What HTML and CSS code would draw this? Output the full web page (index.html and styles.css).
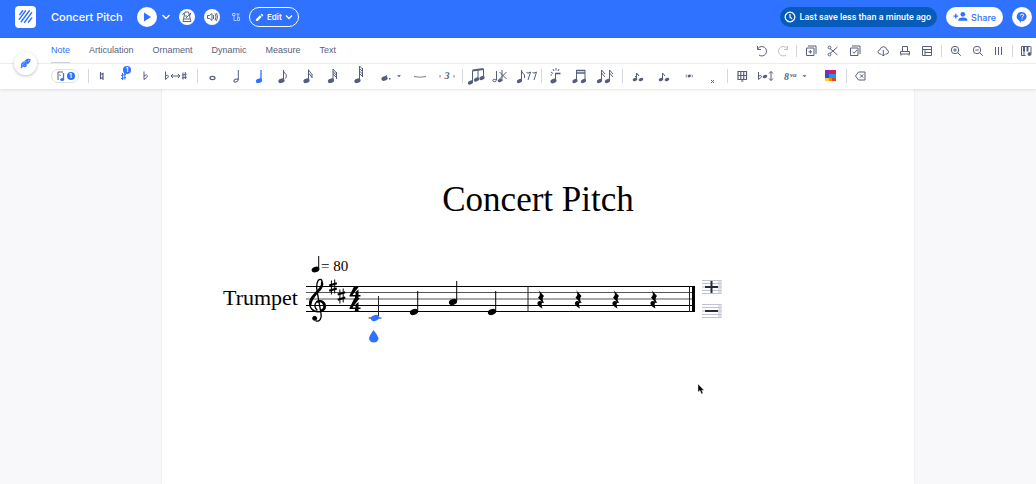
FILE: index.html
```html
<!DOCTYPE html>
<html lang="en">
<head>
<meta charset="utf-8">
<title>Concert Pitch</title>
<link rel="stylesheet" href="styles.css">
</head>
<body>
<svg class="defs" aria-hidden="true">
  <defs>
    <symbol id="head" viewBox="0 0 8 6"><ellipse cx="4" cy="3" rx="3.2" ry="2.2" transform="rotate(-20 4 3)" fill="currentColor"/></symbol>
    <g id="rest"><path d="M-2.500 -10 L3 -4 Q0 -1 3.200 3 Q-1 1.500 1.500 8.500 Q-4.500 5.500 -3.500 2.500 Q-1.500 0 1 2 L-3 -2.500 Q.5 -5.500 -2.500 -10Z"/></g>
    <g id="note"><ellipse cx="0" cy="0" rx="4.200" ry="2.900" transform="rotate(-20)"/><path d="M3.200 -1h1v-20h-1z"/></g>
    <g id="sharp"><path d="M-1.600 -6.500V7.500M1.700 -7.500V6.500" fill="none" stroke="#000" stroke-width="1"/><path d="M-3.800 -1.500L3.800 -3.800M-3.800 3.800L3.800 1.500" fill="none" stroke="#000" stroke-width="2.200"/></g>
  </defs>
</svg>

<header class="topbar">
  <a class="logo" href="#" aria-label="Home"><svg viewBox="0 0 22 22"><g stroke="#2f72ff" stroke-width="1.500" stroke-linecap="round"><path d="M5 9l3-4M4.500 14l6.500-9M6.500 16.500L15 5M10 17l7.500-10M14 17l3.500-4.500"/></g></svg></a>
  <h1 class="doc-title">Concert Pitch</h1>
  <button class="round play" aria-label="Play"><svg viewBox="0 0 20 20"><path d="M7 5.500v9l7-4.500z" fill="#2f72ff"/></svg></button>
  <button class="plain chevron" aria-label="Playback options"><svg viewBox="0 0 10 10"><path d="M1.500 3l3.500 3.500L8.500 3" stroke="#fff" stroke-width="1.400"/></svg></button>
  <button class="round small metronome" aria-label="Metronome"><svg viewBox="0 0 16 16"><path d="M6 3h3.500l2.500 9.500H4zM5 10h6M7 9l5-5M5 4l-1.500 2M10 5l2 1M7 6v2" stroke="#4d5878" stroke-width=".9"/></svg></button>
  <button class="round small sound" aria-label="Sound"><svg viewBox="0 0 16 16"><path d="M3.500 6.500h2l2.500-2v7l-2.500-2h-2zM9.500 6v4M11 4.500q2 3.500 0 7M12.500 4q2 4 0 8" stroke="#4d5878" stroke-width=".9"/></svg></button>
  <button class="plain tuner" aria-label="Count in"><svg viewBox="0 0 12 12"><path d="M2.500 2.500h2.500v2h-2.500zM4 4.500v5h2.500M6.500 3h3M8 3v3.500M7.500 6.500h2v3h-2z" stroke="#c3d5ff" stroke-width=".9"/></svg></button>
  <button class="edit"><svg viewBox="0 0 10 10"><path d="M1 9V7l4.500-4.500 2 2L3 9zM6.200 1.800L7.500.7l1.800 1.800-1.100 1.300z" fill="#fff"/></svg>Edit<svg class="tiny" viewBox="0 0 8 8"><path d="M1 2.500l3 3 3-3" stroke="#fff" stroke-width="1.300"/></svg></button>
  <div class="account">
    <p class="saved"><svg viewBox="0 0 12 12"><path d="M6 1.200a4.800 4.800 0 1 0 .01 0M6 3v3.200l2 1.600" stroke="#fff" stroke-width="1.200"/></svg>Last save less than a minute ago</p>
    <button class="share"><svg viewBox="0 0 16 12"><path d="M3 3v5M.5 5.500h5" stroke="#2f72ff" stroke-width="1.400"/><circle cx="10.500" cy="3.500" r="2.500" fill="#2f72ff"/><path d="M5.500 10.500q0-3.500 5-3.500t5 3.500z" fill="#2f72ff"/></svg>Share</button>
    <button class="round help" aria-label="Help"><svg viewBox="0 0 20 20"><path d="M10 5a4.600 4.600 0 1 1-1 9.100L9 16l-2-2.500A4.600 4.600 0 0 1 10 5z" fill="#2f72ff"/><path d="M8.500 8.500q0-1.400 1.600-1.400t1.500 1.300q0 .8-1.500 1.600v.6M10.100 11.500v1" stroke="#fff"/></svg></button>
  </div>
</header>

<div class="tools">
  <button class="design" aria-label="Design tools"><svg viewBox="0 0 16 16"><path d="M4 11q-1-5 3-6 3-2 5-1 1 4-2 5-2 3-6 2z" fill="#8fb3ff"/><path d="M4 11q-1-3 2-4M8 5q3-2 5-1-.5 3-3 4M3 13L11 5M6 8l3 2M7 6l3 2M9 5l2 2M6 11q2 1 3-1" stroke="#2f72ff" stroke-width="1.200"/></svg></button>
  <div class="tab-row">
    <nav class="tabs">
      <a class="tab active" href="#">Note</a><a class="tab" href="#">Articulation</a><a class="tab" href="#">Ornament</a><a class="tab" href="#">Dynamic</a><a class="tab" href="#">Measure</a><a class="tab" href="#">Text</a>
    </nav>
    <div class="actions">
      <button class="tool w22" aria-label="Undo"><svg viewBox="0 0 24 24"><path d="M8 9.500a4.700 4.700 0 1 1 1 6.500M7.500 7v3.500H11"/></svg></button>
      <button class="tool w20 muted" aria-label="Redo"><svg viewBox="0 0 24 24"><path d="M16 9.500a4.700 4.700 0 1 0-1 6.500M16.500 7v3.500H13"/></svg></button>
      <span class="sep wide"></span>
      <button class="tool w22" aria-label="Copy"><svg viewBox="0 0 24 24"><path d="M7.500 9h7.500v7.500H7.500zM9 7h8v8M11.300 11v3.600M9.500 12.800h3.600"/></svg></button>
      <button class="tool w22" aria-label="Cut"><svg viewBox="0 0 24 24"><path d="M9 14.500L16.500 8M9 9.500l7.500 6.500"/><circle cx="8.500" cy="8.500" r="1.400"/><circle cx="8.500" cy="15.500" r="1.400"/></svg></button>
      <button class="tool w22 last-clip" aria-label="Paste"><svg viewBox="0 0 24 24"><path d="M7.500 9h7.500v7.500H7.500zM9 7h8v8M9.500 12.700l1.500 1.500 3-3.200"/></svg></button>
      <button class="tool w22" aria-label="Export"><svg viewBox="0 0 24 24"><path d="M10 15H9q-2-.3-2-2.300 0-1.700 2-2 .7-3 3.500-3 2.700 0 3.300 3 1.700.3 1.700 2 0 2-2 2.300h-1M12.300 11v6M10.500 15.200l1.800 1.800 1.800-1.800"/></svg></button>
      <button class="tool w22" aria-label="Print"><svg viewBox="0 0 24 24"><path d="M9.500 12.500V7.500h5v5M7.500 12.500h9v2.500h-9zM8 15v1.500M16 15v1.500"/></svg></button>
      <button class="tool w22" aria-label="Layout"><svg viewBox="0 0 24 24"><path d="M7.500 7.500h9v9h-9zM7.500 10.500h9M10 13.500h6.500M10 10.500v6"/></svg></button>
      <span class="sep wide"></span>
      <button class="tool w22" aria-label="Zoom in"><svg viewBox="0 0 24 24"><circle cx="11" cy="11" r="3.700"/><path d="M13.800 13.800l3 3M9.200 11h3.600M11 9.200v3.600"/></svg></button>
      <button class="tool w22" aria-label="Zoom out"><svg viewBox="0 0 24 24"><circle cx="11" cy="11" r="3.700"/><path d="M13.800 13.800l3 3M9.200 11h3.600"/></svg></button>
      <button class="tool w20" aria-label="Page width"><svg viewBox="0 0 24 24"><path d="M8.500 8v8M11.500 8v8M14.500 8v8"/></svg></button>
      <span class="sep wide"></span>
      <button class="tool w20" aria-label="Piano"><svg viewBox="0 0 24 24"><path d="M7.500 16.500V7.500h9M7.500 16.500h4M10 12v4M17 7.500v7"/><path d="M9 7.500h2v5H9zM12.500 7.500h2v5h-2z" fill="currentColor" stroke="none"/><circle cx="15.500" cy="15" r="1.500" fill="currentColor"/></svg></button>
    </div>
  </div>

  <div class="note-row">
    <button class="chip" aria-label="Voice 1"><svg viewBox="0 0 10 14"><path d="M2 3v8M2 3h5M3.500 5.500l1 1.500"/><path d="M7.500 4v6.500" stroke="#2f72ff" stroke-width="1.300"/><ellipse cx="6.200" cy="10.500" rx="2" ry="1.500" fill="#2f72ff" stroke="none"/></svg><b class="badge">1</b></button>
    <span class="sep"></span>
    <button class="tool w22" aria-label="Natural"><svg viewBox="0 0 24 24"><path d="M10.500 8v6.500l2.500-1M10.500 10.500l2.500-1V16" stroke-width="1.200"/></svg></button>
    <button class="tool w22 on" aria-label="Sharp"><svg viewBox="0 0 24 24"><path d="M10.500 9v7M12.800 8.500v7M9 11.500l5-1M9 14.500l5-1"/></svg><b class="badge float">1</b></button>
    <button class="tool w22" aria-label="Flat"><svg viewBox="0 0 24 24"><path d="M10 7.500v8q3.500-2 3.500-3.700-.5-2-3.500 0"/></svg></button>
    <button class="tool w38" aria-label="Enharmonic"><svg viewBox="0 0 24 24"><path d="M1.500 7.500v8q3-2 3-3.500-.5-1.500-3 0M7 12h9M9 10l-2 2 2 2M14 10l2 2-2 2M19 8.500v7M21.300 8v7M17.800 11.200l5-1M17.800 14l5-1"/></svg></button>
    <span class="sep"></span>
    <button class="tool w24" aria-label="Whole note"><svg viewBox="0 0 24 24"><ellipse cx="12.500" cy="14" rx="2.500" ry="1.600" stroke-width="1.200"/></svg></button>
    <button class="tool w24" aria-label="Half note"><svg viewBox="0 0 24 24"><ellipse cx="12" cy="16.500" rx="2.200" ry="1.400" transform="rotate(-20 12 16.500)"/><path d="M14.300 6v10"/></svg></button>
    <button class="tool w24 on" aria-label="Quarter note"><svg viewBox="0 0 24 24"><path d="M13 6v11" stroke-width="1.300"/><use href="#head" x="7" y="13.800" width="8" height="6"/></svg></button>
    <button class="tool w24" aria-label="Eighth note"><svg viewBox="0 0 24 24"><path d="M11.500 6v11M11.500 7q1 2 2.500 3.500 1 2-.5 4"/><use href="#head" x="5.500" y="13.800" width="8" height="6"/></svg></button>
    <button class="tool w24" aria-label="Sixteenth note"><svg viewBox="0 0 24 24"><path d="M12.500 5.500V17M12.500 6l3.500 4.500M12.500 9l3.500 4.500M16 10v4"/><use href="#head" x="6.500" y="13.800" width="8" height="6"/></svg></button>
    <button class="tool w24" aria-label="Thirty-second note"><svg viewBox="0 0 24 24"><path d="M13 5V17M13 5l3.500 4M13 7.500l3.500 4M13 10l3.500 3.500M16.500 8v7"/><use href="#head" x="7" y="13.800" width="8" height="6"/></svg></button>
    <button class="tool w30" aria-label="Sixty-fourth note"><svg viewBox="0 0 24 24"><path d="M12.500 2V17M12.500 2l3 3M12.500 4.500l3 3M12.500 7l3 3M12.500 9.500l3 3M15.500 4v9"/><use href="#head" x="6.500" y="13.800" width="8" height="6"/></svg></button>
    <button class="tool w32" aria-label="Dotted note"><svg viewBox="0 0 24 24"><use href="#head" x="2.500" y="11.500" width="8" height="6"/><path d="M8.500 11v3" stroke-width=".8"/><path d="M11 14h1.500v1.500H11zM19 11.300h4l-2 2z" fill="currentColor" stroke="none"/></svg></button>
    <button class="tool w28" aria-label="Tie"><svg viewBox="0 0 24 24"><path d="M6 12.500q6 1.500 12 0" stroke-width=".8"/></svg></button>
    <button class="tool w26" aria-label="Triplet"><svg viewBox="0 0 24 24"><path d="M5 11v2.500M19 11v2.500" stroke-width=".8"/><text class="glyph-text" x="9.500" y="15">3</text></svg></button>
    <span class="sep"></span>
    <button class="tool w24" aria-label="Beam"><svg viewBox="0 0 24 24"><path d="M7.500 6.500V18M13 6v10M18.500 5v9"/><path d="M7.500 6.500l11-1.500" stroke-width="2"/><use href="#head" x="2" y="15.500" width="7" height="6"/><use href="#head" x="8" y="12.500" width="7" height="6"/><use href="#head" x="13.500" y="11" width="7" height="6"/></svg></button>
    <button class="tool w24" aria-label="Split"><svg viewBox="0 0 24 24"><ellipse cx="5.500" cy="16.500" rx="1.700" ry="1.200"/><path d="M7.500 7v9M13 6v11M10.500 8l7 7M17.500 8l-7 7"/><use href="#head" x="8" y="14" width="6" height="5"/></svg></button>
    <button class="tool w26" aria-label="Fill with rests"><svg viewBox="0 0 24 24"><path d="M7.500 6v11l0-10q1 2 3 4v3M12.500 8.500q1 1.500 4-.5l-2.500 8M18.500 8.500q1 1.500 4-.5l-2.500 8"/><use href="#head" x="2" y="14" width="7" height="6"/></svg></button>
    <span class="sep"></span>
    <button class="tool w24" aria-label="Accent note"><svg viewBox="0 0 24 24"><path d="M11.500 9v8M7 8l2 1.500M8 11H6.500M9 5l1 2M12 4v2.500M15 5l-1 2"/><path d="M11.500 9.500h5" stroke-width="1.600"/><use href="#head" x="5.500" y="14" width="8" height="6"/></svg></button>
    <button class="tool w24" aria-label="Beamed notes"><svg viewBox="0 0 24 24"><path d="M8.500 6v11M17 6v11"/><path d="M8.500 6.500H17M8.500 9H17" stroke-width="1.500"/><use href="#head" x="3.500" y="14" width="7" height="6"/><use href="#head" x="12" y="14" width="7" height="6"/></svg></button>
    <button class="tool w28" aria-label="Separate notes"><svg viewBox="0 0 24 24"><path d="M7.500 6v11M7.500 6l3.500 4M7.500 9l3.500 4M15.500 6v11M15.500 6l3.500 4M15.500 9l3.500 4"/><use href="#head" x="2" y="14" width="7" height="6"/><use href="#head" x="10" y="14" width="7" height="6"/></svg></button>
    <span class="sep"></span>
    <button class="tool w26" aria-label="Grace note"><svg viewBox="0 0 24 24"><path d="M10.500 9v7M10.500 9l2.500 3M9 13l3-3"/><use href="#head" x="6" y="12.500" width="6" height="6"/><use href="#head" x="12" y="12.500" width="6" height="6"/></svg></button>
    <button class="tool w26" aria-label="Appoggiatura"><svg viewBox="0 0 24 24"><path d="M10.500 9v7M10.500 9l2.500 3"/><use href="#head" x="6" y="12.500" width="6" height="6"/><use href="#head" x="12" y="12.500" width="6" height="6"/></svg></button>
    <button class="tool w24" aria-label="Ghost note"><svg viewBox="0 0 24 24"><path d="M9.500 10.500q-1 1.500 0 3M15 10.500q1 1.500 0 3" stroke-width=".7"/><use href="#head" x="10" y="10" width="4.500" height="4"/></svg></button>
    <button class="tool w24" aria-label="Dead note"><svg viewBox="0 0 24 24"><path d="M10 16l3 3M13 16l-3 3"/></svg></button>
    <span class="sep"></span>
    <button class="tool w24" aria-label="Chord grid"><svg viewBox="0 0 24 24"><path d="M8 7.500h8.500v8H8zM8 11.500h8.500M10.800 7.500v8M13.700 7.500v8M11 17h2.500" stroke-width="1.200"/></svg></button>
    <button class="tool w24" aria-label="Transpose"><svg viewBox="0 0 24 24"><path d="M4.500 8v7.500q3-2 3-3.300-.5-1.500-3 0M17 7.500v9M15 9.500l2-2 2 2M15 14.500l2 2 2-2"/><use href="#head" x="8" y="10" width="6" height="5"/></svg></button>
    <button class="tool w36" aria-label="Octave"><svg viewBox="0 0 24 24"><text class="glyph-text" x="0" y="15.500">8</text><text class="glyph-sup" x="6" y="12.500">va</text><path d="M18.500 11.300h4l-2 2z" fill="currentColor" stroke="none"/></svg></button>
    <button class="tool w30" aria-label="Note colors"><svg viewBox="0 0 24 24"><g stroke="none"><path d="M8 6h11v4H8z" fill="#d51c61"/><path d="M8 6h4v4H8z" fill="#8529b8"/><path d="M8 10h11v4H8z" fill="#149de8"/><path d="M8 10h4v4H8z" fill="#324bd2"/><path d="M8 14h11v3H8z" fill="#ff8500"/><path d="M8 14h4v3H8z" fill="#ffd31a"/><path d="M15 14h4v3h-4z" fill="#e93a2c"/></g></svg></button>
    <span class="sep"></span>
    <button class="tool w24" aria-label="Delete"><svg viewBox="0 0 24 24"><path d="M6.500 12l3-4H16v8H9.500zM11 10.300l3.400 3.400M14.400 10.300L11 13.700"/></svg></button>
  </div>
</div>

<main class="workspace">
  <article class="sheet">
    <h2 class="score-title">Concert Pitch</h2>
    <section class="system">
      <p class="instrument">Trumpet</p>
      <svg class="staff" viewBox="306 250 390 98" role="img" aria-label="Trumpet staff">
        <g stroke="#000"><path d="M306 286.500h388M306 305.500h388M306 311.500h388" stroke-width="1.200"/><path d="M306 292.500h388M306 299h388" stroke="#555"/><path d="M528 286v26M689.500 286v26" stroke="#222"/><path d="M693.500 286v26" stroke-width="3"/></g>
        <ellipse cx="315.500" cy="269.500" rx="4" ry="2.700" transform="rotate(-20 315.500 269.500)"/><path d="M318.200 256h1v13h-1z"/>
        <text class="tempo" x="321" y="271">= 80</text>
        <g transform="translate(215 250) scale(.3333)" fill="none" stroke="#000" stroke-linecap="round">
          <path d="M306 180C293 166 303 151 316 153C335 156 337 181 315 185C292 189 280 169 285 152C290 137 305 127 315 114C324 102 323 89 316 88C307 87 303 106 306 122L318 190C321 207 313 215 303 213" stroke-width="4"/>
          <path d="M286 165C285 149 301 133 314 119C322 109 322 102 321 98" stroke-width="7"/>
          <path d="M308 155C325 148 336 171 321 181" stroke-width="7"/>
          <circle cx="299" cy="205" r="6" fill="#000" stroke-width="3"/>
        </g>
        <use href="#sharp" x="333" y="287"/><use href="#sharp" x="341.500" y="296"/>
        <g id="time-four"><path d="M349.500 295.500L354 286.500h5l-6.500 8.500h3v-3l3-2.500v5.500h2v1.500h-2v1.500l1.500 1h-6.500l1.500-1v-1.500h-5.500z"/></g>
        <use href="#time-four" y="12.500"/>
        <g fill="#2f72ff"><path d="M368.500 317.500h13v1h-13z" fill="#333"/><path d="M378 296h1v20h-1z" fill="#222"/><ellipse cx="375" cy="318" rx="4.200" ry="2.900" transform="rotate(-20 375 318)"/><path d="M373.500 330q5 6.500 5 8.500a4.700 4 0 0 1-9.500 0q0-2 4.500-8.500z"/></g>
        <use href="#note" x="414" y="312"/><use href="#note" x="453" y="302"/><use href="#note" x="492" y="312"/>
        <use href="#rest" x="541" y="300"/><use href="#rest" x="578.500" y="300"/><use href="#rest" x="616" y="300"/><use href="#rest" x="654" y="300"/>
      </svg>
      <div class="measure-buttons">
        <button class="measure" aria-label="Add measure"><svg viewBox="0 0 20 14"><path d="M0 .5h19M0 3.500h19M0 7h19M0 10.500h19M0 13.500h19M17 0v14M19 0v14" stroke="#bfc2d3"/><path d="M3 7h13M9.500 1v12" stroke="#282b3e" stroke-width="2"/></svg></button>
        <button class="measure" aria-label="Remove measure"><svg viewBox="0 0 20 14"><path d="M0 .5h19M0 3.500h19M0 7h19M0 10.500h19M0 13.500h19M17 0v14M19 0v14" stroke="#bfc2d3"/><path d="M3 7h13" stroke="#282b3e" stroke-width="2"/></svg></button>
      </div>
    </section>
  </article>
  <svg class="pointer" viewBox="0 0 8 12" aria-hidden="true"><path d="M1 1v8l2-1.500L4.500 11l1.500-.7-1.300-3H7z" fill="#000" stroke="#ddd" stroke-width=".5"/></svg>
</main>
</body>
</html>
```
FILE: styles.css
```css
* { box-sizing: border-box; }
body {
  margin: 0;
  min-height: 100vh;
  display: flex;
  flex-direction: column;
  font-family: Inter, "Liberation Sans", sans-serif;
  color: #555f7d;
  background: #f8f8fa;
  overflow: hidden;
}
button { font: inherit; color: inherit; border: 0; padding: 0; background: none; cursor: pointer; }
svg { display: block; flex: none; fill: none; }
h1, h2, p { margin: 0; }
.defs { position: absolute; width: 0; height: 0; }

.topbar {
  display: flex;
  align-items: center;
  height: 38px;
  padding: 0 4px 4px 15px;
  background: #2f72ff;
  color: #fff;
}
.logo { width: 21px; height: 22px; border-radius: 4px; background: #fff; }
.doc-title { margin-left: 15px; width: 86px; font-size: 11px; font-weight: 500; white-space: nowrap; }
.round { width: 20px; height: 20px; border-radius: 50%; background: #fff; flex: none; }
.small { width: 16px; height: 16px; }
.plain { flex: none; }
.chevron { width: 10px; margin-left: 4px; }
.metronome { margin-left: 8px; }
.sound { margin-left: 9px; }
.tuner { width: 12px; margin-left: 10px; }
.edit {
  display: flex;
  align-items: center;
  gap: 3px;
  height: 20px;
  margin-left: 7px;
  padding: 0 5px;
  border: 1px solid #fff;
  border-radius: 10px;
  font-size: 8px;
  font-weight: 600;
}
.edit svg { width: 9px; }
.edit .tiny { width: 8px; }
.account { display: flex; align-items: center; gap: 9px; margin-left: auto; white-space: nowrap; }
.saved {
  display: flex;
  align-items: center;
  gap: 4px;
  height: 20px;
  padding: 0 6px 0 4px;
  border-radius: 10px;
  background: #075cba;
  font-family: Roboto, sans-serif;
  font-size: 9px;
  font-weight: 500;
}
.saved svg { width: 12px; }
.share {
  display: flex;
  align-items: center;
  gap: 3px;
  height: 20px;
  padding: 0 7px;
  border-radius: 10px;
  background: #fff;
  color: #2f72ff;
  font-size: 9px;
  font-weight: 500;
}
.share svg { width: 15px; }

.tools { position: relative; z-index: 1; background: #fff; box-shadow: 0 1px 3px #0000001c; }
.tab-row { display: flex; height: 26px; padding-left: 51px; border-bottom: 1px solid #ececf0; }
.tabs { display: flex; gap: 19px; font-family: "Liberation Sans", sans-serif; font-size: 9px; }
.tab { display: flex; align-items: center; color: inherit; text-decoration: none; border-bottom: 1px solid transparent; }
.tab.active { color: #2f72ff; border-color: #cdd0dc; }
.actions { display: flex; align-items: center; margin-left: auto; }
.last-clip { margin-right: 6px; }
.note-row { display: flex; align-items: center; height: 25px; padding: 0 0 1px 51px; }
.tool {
  display: flex;
  align-items: center;
  justify-content: center;
  position: relative;
  flex: none;
  height: 24px;
}
.tool svg { width: 24px; height: 24px; overflow: visible; stroke: currentColor; stroke-width: 1; }
.tool use { stroke: none; }
.w20 { width: 20px; }
.w22 { width: 22px; }
.w24 { width: 24px; }
.w26 { width: 26px; }
.w28 { width: 28px; }
.w30 { width: 30px; }
.w32 { width: 32px; }
.w36 { width: 36px; }
.w38 { width: 38px; }
.on { color: #2f72ff; }
.muted { color: #b9bdca; }
.sep { flex: none; width: 1px; height: 14px; margin: 0 2px; background: #d5d7df; }
.sep.wide { height: 12px; margin: 0 3px; }
.tool .glyph-text { font: italic bold 10px "Liberation Serif", serif; fill: currentColor; stroke: none; }
.tool .glyph-sup { font: italic bold 7px "Liberation Serif", serif; fill: currentColor; stroke: none; }
.chip {
  display: flex;
  align-items: center;
  justify-content: center;
  gap: 1px;
  width: 28px;
  height: 14px;
  margin-right: 7px;
  border: 1px solid #dfe1e8;
  border-radius: 7px;
}
.chip svg { width: 10px; stroke: #555f7d; }
.badge {
  width: 8px;
  height: 8px;
  border-radius: 50%;
  background: #2f72ff;
  color: #fff;
  font-size: 6px;
  line-height: 8px;
  text-align: center;
}
.badge.float { position: absolute; top: 2px; right: 4px; }
.design {
  position: absolute;
  left: 14px;
  top: 14px;
  display: grid;
  place-items: center;
  width: 23px;
  height: 23px;
  border-radius: 50%;
  background: #fff;
  box-shadow: 0 1px 3px #00000040;
}
.design svg { width: 15px; }

.workspace { position: relative; display: flex; flex: 1; padding: 0 122px 0 162px; }
.sheet { flex: 1; padding-top: 92px; background: #fff; box-shadow: 0 0 2px #00000018; color: #000; font-family: "Liberation Serif", serif; }
.score-title { font-size: 35px; line-height: 38px; font-weight: 400; text-align: center; }
.system { display: flex; padding: 31px 0 0 61px; }
.instrument { width: 83px; padding-top: 36px; font-size: 22px; line-height: 24px; }
.staff { width: 390px; fill: #000; }
.tempo { font: 15px "Liberation Serif", serif; }
.measure-buttons { display: flex; flex-direction: column; gap: 10px; padding: 30px 0 0 6px; }
.measure svg { width: 20px; }
.pointer { position: absolute; left: 697px; top: 294px; width: 8px; }
```
